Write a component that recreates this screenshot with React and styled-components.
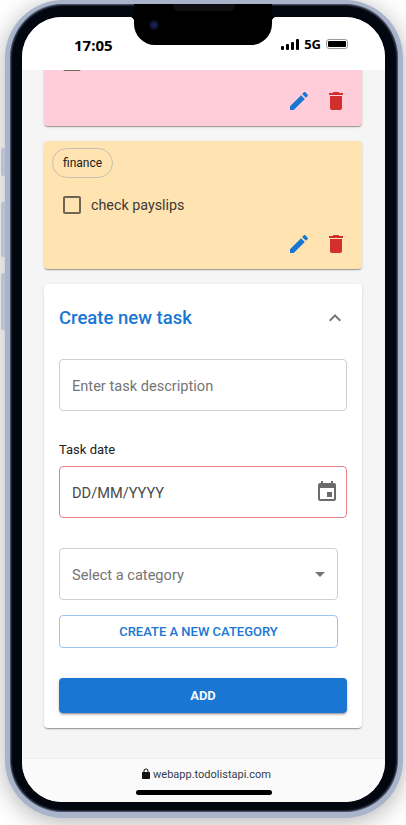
import React from 'react'
import styled, { createGlobalStyle } from 'styled-components'

const GlobalStyle = createGlobalStyle`
  html, body { margin: 0; padding: 0; background: #fff; }
  body { width: 406px; height: 825px; overflow: hidden; font-family: Roboto, "Noto Sans", sans-serif; }
  * { box-sizing: border-box; }
`

const Icon = ({ d, size = 24, color = 'currentColor' }) => (
  <svg width={size} height={size} viewBox="0 0 24 24" fill={color} style={{ display: 'block', flexShrink: 0 }}>
    <path d={d} />
  </svg>
)

const icons = {
  edit: 'M3 17.25V21h3.75L17.81 9.94l-3.75-3.75L3 17.25zM20.71 7.04c.39-.39.39-1.02 0-1.41l-2.34-2.34c-.39-.39-1.02-.39-1.41 0l-1.83 1.83 3.75 3.75 1.83-1.83z',
  trash: 'M6 19c0 1.1.9 2 2 2h8c1.1 0 2-.9 2-2V7H6v12zM19 4h-3.5l-1-1h-5l-1 1H5v2h14V4z',
  event: 'M17 12h-5v5h5v-5zM16 1v2H8V1H6v2H5c-1.11 0-1.99.9-1.99 2L3 19c0 1.1.89 2 2 2h14c1.1 0 2-.9 2-2V5c0-1.1-.9-2-2-2h-1V1h-2zm3 18H5V8h14v11z',
  less: 'M12 8l-6 6 1.41 1.41L12 10.83l4.59 4.58L18 14z',
  drop: 'M7 10l5 5 5-5z',
  lock: 'M18 8h-1V6c0-2.76-2.24-5-5-5S7 3.24 7 6v2H6c-1.1 0-2 .9-2 2v10c0 1.1.9 2 2 2h12c1.1 0 2-.9 2-2V10c0-1.1-.9-2-2-2zM9 6c0-1.66 1.34-3 3-3s3 1.34 3 3v2H9V6z',
  box: 'M19 5v14H5V5h14m0-2H5c-1.1 0-2 .9-2 2v14c0 1.1.9 2 2 2h14c1.1 0 2-.9 2-2V5c0-1.1-.9-2-2-2z',
}

const TaskCard = ({ bg, category, text }) => (
  <Card bg={bg}>
    {category && <Chip>{category}</Chip>}
    <TaskRow>
      <CheckIcon><Icon d={icons.box} /></CheckIcon>
      {text && <TaskText>{text}</TaskText>}
    </TaskRow>
    <Actions>
      <Icon d={icons.edit} color="#1976d2" />
      <Icon d={icons.trash} color="#d32f2f" />
    </Actions>
  </Card>
)

const App = () => (
  <>
    <GlobalStyle />
    <Phone>
      <SideKey top={148} h={28} />
      <SideKey top={202} h={55} />
      <SideKey top={273} h={57} />
      <Notch>
        <Speaker />
        <Camera />
      </Notch>
      <Screen>
        <StatusBar>
          <Clock>17:05</Clock>
          <StatusRight>
            <Signal>
              <i style={{ height: 4 }} />
              <i style={{ height: 6 }} />
              <i style={{ height: 8 }} />
              <i style={{ height: 11 }} />
            </Signal>
            <Network>5G</Network>
            <Battery><BatteryFill /></Battery>
          </StatusRight>
        </StatusBar>
        <Content>
          <TaskCard bg="#ffcdd9" />
          <TaskCard bg="#ffe3b0" category="finance" text="check payslips" />
          <CreateCard>
            <CreateHeader>
              <CreateTitle>Create new task</CreateTitle>
              <Icon d={icons.less} color="#757575" />
            </CreateHeader>
            <Field>
              <Placeholder>Enter task description</Placeholder>
            </Field>
            <DateLabel>Task date</DateLabel>
            <Field error>
              <DateValue>DD/MM/YYYY</DateValue>
              <Icon d={icons.event} color="#6b6b6b" />
            </Field>
            <Field narrow spaced>
              <Placeholder>Select a category</Placeholder>
              <Icon d={icons.drop} color="#757575" />
            </Field>
            <OutlineButton>CREATE A NEW CATEGORY</OutlineButton>
            <AddButton>ADD</AddButton>
          </CreateCard>
        </Content>
        <UrlBar>
          <UrlRow>
            <Icon d={icons.lock} size={12} color="#111" />
            <UrlText>webapp.todolistapi.com</UrlText>
          </UrlRow>
          <HomeIndicator />
        </UrlBar>
      </Screen>
    </Phone>
  </>
)

export default App

const Phone = styled.div`
  position: relative;
  width: 398px;
  height: 818px;
  margin-left: 5px;
  padding: 13px 13px 10px 12px;
  background: #02060f;
  border-style: solid;
  border-color: #a9b4ca;
  border-width: 4px 5px 6px 5px;
  border-radius: 58px;
  box-shadow: 0 4px 24px rgba(0, 0, 0, 0.3), inset 0 0 2px 1px #5f6b86;
`

const SideKey = styled.div`
  position: absolute;
  left: -9px;
  top: ${p => p.top - 4}px;
  width: 4px;
  height: ${p => p.h}px;
  background: #b9c1d3;
  border-radius: 2px 0 0 2px;
`

const Notch = styled.div`
  position: absolute;
  z-index: 2;
  left: 124px;
  top: 0;
  width: 138px;
  height: 41px;
  background: #000;
  border-radius: 0 0 21px 21px;

  &::before, &::after {
    content: '';
    position: absolute;
    top: 13px;
    width: 5px;
    height: 5px;
  }
  &::before {
    left: -5px;
    background: radial-gradient(circle at 0 100%, transparent 5px, #000 5.5px);
  }
  &::after {
    right: -5px;
    background: radial-gradient(circle at 100% 100%, transparent 5px, #000 5.5px);
  }
`

const Speaker = styled.div`
  position: absolute;
  left: 39px;
  top: 0;
  width: 62px;
  height: 7px;
  background: #0e0f12;
  border-radius: 0 0 5px 5px;
`

const Camera = styled.div`
  position: absolute;
  left: 15px;
  top: 16px;
  width: 10px;
  height: 10px;
  border-radius: 50%;
  background: radial-gradient(circle, #1c2a6e 0, #141c48 30%, #0a0b14 70%);
`

const Screen = styled.div`
  display: flex;
  flex-direction: column;
  height: 100%;
  background: #fff;
  border-radius: 40px;
  overflow: hidden;
`

const StatusBar = styled.div`
  flex: 0 0 53px;
  display: flex;
  justify-content: space-between;
  align-items: center;
  padding: 1px 37px 0 52px;
  background: #fff;
`

const Clock = styled.div`
  margin-top: 2px;
  font-family: "Noto Sans", sans-serif;
  font-size: 15px;
  font-weight: 700;
  color: #000;
`

const StatusRight = styled.div`
  display: flex;
  align-items: center;
  gap: 5px;
`

const Signal = styled.div`
  display: flex;
  align-items: flex-end;
  gap: 2px;
  height: 11px;

  i {
    display: block;
    width: 3px;
    background: #000;
    border-radius: 1px;
  }
`

const Network = styled.div`
  font-family: "Noto Sans", sans-serif;
  font-size: 13px;
  font-weight: 700;
  color: #000;
  line-height: 14px;
`

const Battery = styled.div`
  width: 22px;
  height: 10px;
  padding: 1px;
  border: 1px solid #999;
  border-radius: 3px;
`

const BatteryFill = styled.div`
  width: 100%;
  height: 100%;
  background: #000;
  border-radius: 1px;
`

const Content = styled.div`
  flex: 1;
  min-height: 0;
  overflow: hidden;
  display: flex;
  flex-direction: column;
  justify-content: flex-end;
  gap: 15px;
  padding: 0 23px 30px 22px;
  background: #f5f5f5;
`

const Card = styled.div`
  flex-shrink: 0;
  display: flex;
  flex-direction: column;
  height: 128px;
  justify-content: flex-end;
  padding: 7px 14px 13px 8px;
  background: ${p => p.bg};
  border-radius: 4px;
  box-shadow: 0 2px 1px -1px rgba(0, 0, 0, 0.2), 0 1px 1px 0 rgba(0, 0, 0, 0.14), 0 1px 3px 0 rgba(0, 0, 0, 0.12);
`

const Chip = styled.div`
  align-self: flex-start;
  height: 30px;
  margin-bottom: auto;
  padding: 0 10px;
  display: flex;
  align-items: center;
  font-size: 12px;
  color: #212121;
  border: 1px solid #c4c0b4;
  border-radius: 15px;
`

const TaskRow = styled.div`
  display: flex;
  align-items: center;
  gap: 7px;
  padding-left: 8px;
  height: 24px;
  margin-bottom: 15px;
`

const CheckIcon = styled.div`
  color: #6f6552;
`

const TaskText = styled.div`
  font-size: 14.3px;
  color: #3c3a35;
`

const Actions = styled.div`
  display: flex;
  justify-content: flex-end;
  gap: 13px;
`

const CreateCard = styled.div`
  flex-shrink: 0;
  height: 444px;
  padding: 0 15px;
  background: #fff;
  border-radius: 4px;
  box-shadow: 0 2px 1px -1px rgba(0, 0, 0, 0.2), 0 1px 1px 0 rgba(0, 0, 0, 0.14), 0 1px 3px 0 rgba(0, 0, 0, 0.12);
`

const CreateHeader = styled.div`
  display: flex;
  justify-content: space-between;
  align-items: center;
  height: 75px;
  padding: 0 0 7px;
`

const CreateTitle = styled.div`
  font-size: 18.5px;
  font-weight: 500;
  color: #1976d2;
`

const Field = styled.div`
  display: flex;
  justify-content: space-between;
  align-items: center;
  width: ${p => (p.narrow ? '279px' : '288px')};
  height: 52px;
  margin-top: ${p => (p.spaced ? '30px' : '0')};
  padding: 0 ${p => (p.narrow ? '5px' : '7px')} 0 12px;
  border: 1px solid ${p => (p.error ? '#e8808a' : '#cfcfcf')};
  border-radius: 4px;
`

const Placeholder = styled.div`
  margin-top: 1px;
  font-size: 14.6px;
  color: #757575;
`

const DateValue = styled.div`
  margin-top: 2px;
  font-size: 14.6px;
  color: #4a4a4a;
`

const DateLabel = styled.div`
  margin: 30px 0 7px;
  font-size: 13px;
  line-height: 18px;
  color: #222;
`

const OutlineButton = styled.div`
  display: flex;
  justify-content: center;
  align-items: center;
  width: 279px;
  height: 33px;
  margin-top: 15px;
  font-size: 13px;
  font-weight: 500;
  color: #1976d2;
  border: 1px solid #9cc4ee;
  border-radius: 4px;
`

const AddButton = styled.div`
  display: flex;
  justify-content: center;
  align-items: center;
  width: 288px;
  height: 35px;
  margin-top: 30px;
  font-size: 13px;
  font-weight: 700;
  color: #f4f8fd;
  background: #1976d2;
  border-radius: 4px;
  box-shadow: 0 3px 1px -2px rgba(0, 0, 0, 0.2), 0 2px 2px 0 rgba(0, 0, 0, 0.14), 0 1px 5px 0 rgba(0, 0, 0, 0.12);
`

const UrlBar = styled.div`
  flex: 0 0 44px;
  display: flex;
  flex-direction: column;
  align-items: center;
  padding-top: 7px;
  background: #fafafa;
  border-top: 1px solid #f1f1f1;
`

const UrlRow = styled.div`
  display: flex;
  align-items: center;
  gap: 1px;
  height: 16px;
  padding-left: 4px;
`

const UrlText = styled.div`
  font-size: 11px;
  color: #333a4d;
`

const HomeIndicator = styled.div`
  width: 136px;
  height: 5px;
  margin-top: 8px;
  background: #000;
  border-radius: 3px;
`
